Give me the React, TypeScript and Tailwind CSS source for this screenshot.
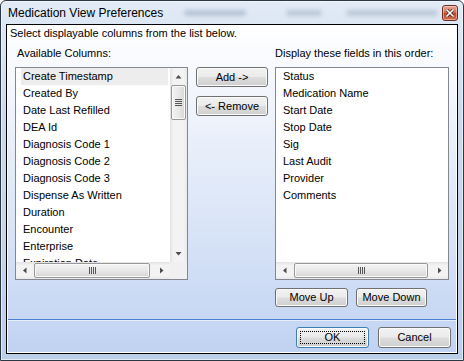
import React from 'react';

const available = [
  'Create Timestamp',
  'Created By',
  'Date Last Refilled',
  'DEA Id',
  'Diagnosis Code 1',
  'Diagnosis Code 2',
  'Diagnosis Code 3',
  'Dispense As Written',
  'Duration',
  'Encounter',
  'Enterprise',
  'Expiration Date',
];

const selected = ['Status', 'Medication Name', 'Start Date', 'Stop Date', 'Sig', 'Last Audit', 'Provider', 'Comments'];

function WinButton({ label, className = '', isDefault = false }: { label: string; className?: string; isDefault?: boolean }) {
  return (
    <button
      type="button"
      className={`relative flex items-center justify-center rounded-[3px] border bg-[linear-gradient(to_bottom,#f2f2f2_0%,#ebebeb_48%,#dddddd_52%,#cfcfcf_100%)] text-[11px] leading-none text-black shadow-[inset_0_0_0_1px_#fbfbfb] ${
        isDefault ? 'border-[#3c7fb1]' : 'border-[#707070]'
      } ${className}`}
    >
      {isDefault && <span className="absolute inset-[3px] border border-dotted border-black" />}
      <span className="relative">{label}</span>
    </button>
  );
}

function Arrow({ dir }: { dir: 'up' | 'down' | 'left' | 'right' }) {
  const pts = {
    up: '0.5,4.5 3.5,1 6.5,4.5',
    down: '0.5,1 3.5,4.5 6.5,1',
    left: '4.5,0.5 1,3.5 4.5,6.5',
    right: '1,0.5 4.5,3.5 1,6.5',
  }[dir];
  const size = dir === 'up' || dir === 'down' ? 'w-[7px] h-[5px]' : 'w-[5px] h-[7px]';
  return (
    <svg className={size} viewBox={dir === 'up' || dir === 'down' ? '0 0 7 5' : '0 0 5 7'}>
      <polygon points={pts} fill="#4d4d4d" />
    </svg>
  );
}

function VScroll() {
  return (
    <div className="flex h-full w-[17px] flex-col bg-[linear-gradient(to_right,#e2e2e2,#f3f3f3_20%,#f3f3f3_80%,#e9e9e9)]">
      <div className="flex h-[17px] items-center justify-center">
        <Arrow dir="up" />
      </div>
      <div className="mx-[1px] flex h-[35px] items-center justify-center rounded-[2px] border border-[#979797] bg-[linear-gradient(to_right,#f3f3f3,#e8e8e8_50%,#d6d6d6)] shadow-[inset_0_0_0_1px_#fafafa]">
        <div className="flex flex-col gap-[1px]">
          <div className="h-[1px] w-[7px] bg-[#555]" />
          <div className="h-[1px] w-[7px] bg-[#555]" />
          <div className="h-[1px] w-[7px] bg-[#555]" />
          <div className="h-[1px] w-[7px] bg-[#555]" />
        </div>
      </div>
      <div className="flex-1" />
      <div className="flex h-[17px] items-center justify-center">
        <Arrow dir="down" />
      </div>
    </div>
  );
}

function HScroll({ thumb }: { thumb: string }) {
  return (
    <div className="flex h-[17px] flex-1 items-center bg-[linear-gradient(to_bottom,#e2e2e2,#f3f3f3_20%,#f3f3f3_80%,#e9e9e9)]">
      <div className="flex h-full w-[17px] items-center justify-center">
        <Arrow dir="left" />
      </div>
      <div className={`flex h-[15px] items-center justify-center rounded-[2px] border border-[#979797] bg-[linear-gradient(to_bottom,#f3f3f3,#e8e8e8_50%,#d6d6d6)] shadow-[inset_0_0_0_1px_#fafafa] ${thumb}`}>
        <div className="flex gap-[1px]">
          <div className="h-[7px] w-[1px] bg-[#555]" />
          <div className="h-[7px] w-[1px] bg-[#555]" />
          <div className="h-[7px] w-[1px] bg-[#555]" />
          <div className="h-[7px] w-[1px] bg-[#555]" />
        </div>
      </div>
      <div className="flex-1" />
      <div className="flex h-full w-[17px] items-center justify-center">
        <Arrow dir="right" />
      </div>
    </div>
  );
}

function Items({ items, highlight }: { items: string[]; highlight?: number }) {
  return (
    <div className="flex-1 overflow-hidden bg-white pl-[5px] pr-[2px]">
      {items.map((it, i) => (
        <div key={it} className={`h-[17px] whitespace-nowrap pl-[2px] leading-[17px] ${i === highlight ? 'bg-[#ededed]' : ''}`}>
          {it}
        </div>
      ))}
    </div>
  );
}

export default function App() {
  return (
    <div className="relative h-[361px] w-[464px] overflow-hidden rounded-t-[6px] border border-[#2c3744] bg-[linear-gradient(to_bottom,#e2ebf6,#cbdaee_30%,#bccfe8)] font-['Liberation_Sans',Arial,sans-serif] text-[11px] text-black shadow-[inset_0_0_0_1px_rgba(255,255,255,0.55)]">
      {/* title bar */}
      <div className="relative flex h-[23px] items-center justify-between pl-[7px] pr-[5px]">
        <span className="absolute left-[183px] top-[9px] h-[6px] w-[62px] rounded-full bg-[#7b8ca3]/40 blur-[2px]" />
        <span className="absolute left-[285px] top-[9px] h-[6px] w-[36px] rounded-full bg-[#7b8ca3]/35 blur-[2px]" />
        <span className="absolute left-[345px] top-[9px] h-[6px] w-[92px] rounded-full bg-[#7b8ca3]/35 blur-[2px]" />
        <span className="relative text-[12px] text-black">Medication View Preferences</span>
        <div className="relative mt-[1px] flex h-[16px] w-[16px] items-center justify-center rounded-[3px] border border-[#6e2b1f] bg-[linear-gradient(to_bottom,#e9a797,#d36b52_45%,#c0432a_55%,#d0704f)] shadow-[inset_0_0_0_1px_rgba(255,255,255,0.4)]">
          <svg className="h-[8px] w-[8px]" viewBox="0 0 8 8">
            <path d="M1 1 L7 7 M7 1 L1 7" stroke="#3a1a14" strokeWidth="3" strokeLinecap="square" />
            <path d="M1 1 L7 7 M7 1 L1 7" stroke="#ffffff" strokeWidth="1.6" strokeLinecap="square" />
          </svg>
        </div>
      </div>

      {/* client area */}
      <div className="mx-[5px] h-[330px] border border-black">
        <div className="flex h-full flex-col border border-white bg-[linear-gradient(to_bottom,#ffffff,#c1d3f2)]">
          <div className="h-[14px] pl-[2px] leading-[14px]">Select displayable columns from the list below.</div>

          <div className="mt-[6px] flex pl-[7px]">
            <div className="flex w-[173px] flex-col">
              <div className="h-[14px] pl-[2px] leading-[14px]">Available Columns:</div>
              <div className="mt-[7px] flex h-[213px] flex-col border border-[#828790]">
                <div className="flex h-[194px]">
                  <Items items={available} highlight={0} />
                  <VScroll />
                </div>
                <div className="flex">
                  <HScroll thumb="w-[116px] ml-[1px]" />
                  <div className="h-[17px] w-[17px] bg-[#f0f0f0]" />
                </div>
              </div>
            </div>

            <div className="ml-[8px] flex w-[72px] flex-col gap-[9px] pt-[21px]">
              <WinButton label="Add ->" className="h-[20px] w-[72px]" />
              <WinButton label="<- Remove" className="h-[20px] w-[72px]" />
            </div>

            <div className="ml-[7px] flex w-[174px] flex-col">
              <div className="h-[14px] leading-[14px]">Display these fields in this order:</div>
              <div className="mt-[7px] flex h-[213px] flex-col border border-[#828790]">
                <div className="flex h-[194px]">
                  <Items items={selected} />
                </div>
                <div className="flex">
                  <HScroll thumb="w-[134px] ml-[1px]" />
                </div>
              </div>
              <div className="mt-[8px] flex gap-[8px]">
                <WinButton label="Move Up" className="h-[19px] w-[73px]" />
                <WinButton label="Move Down" className="h-[19px] w-[71px]" />
              </div>
            </div>
          </div>

          <div className="mt-[12px] h-[1px] bg-[#4c7fd4] shadow-[0_1px_0_#e6eefa]" />

          <div className="mt-[7px] flex justify-end gap-[9px] pr-[5px]">
            <WinButton label="OK" isDefault className="h-[21px] w-[73px]" />
            <WinButton label="Cancel" className="h-[21px] w-[73px]" />
          </div>
        </div>
      </div>
    </div>
  );
}
